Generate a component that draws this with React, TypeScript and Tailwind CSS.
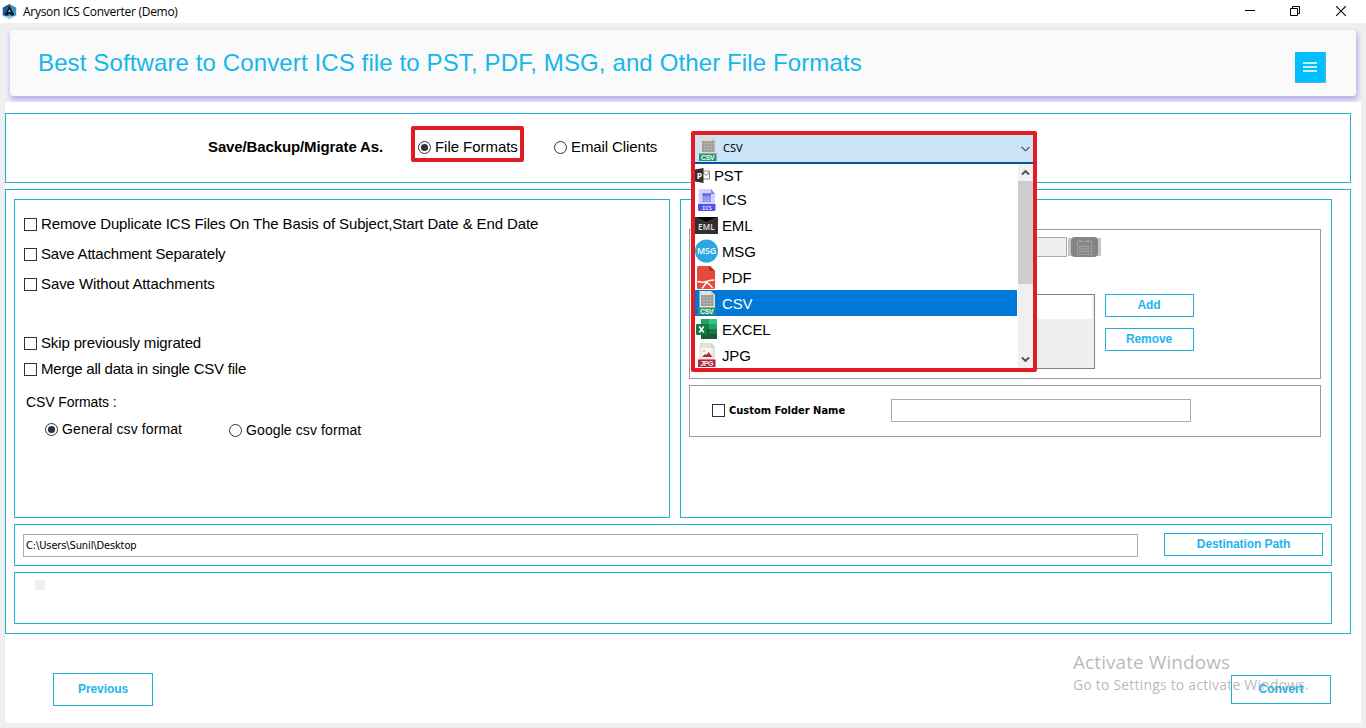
import type { ReactNode } from "react";

function Check({ label, className }: { label: string; className: string }) {
  return (
    <div className={`flex h-[13px] items-center gap-[4px] whitespace-nowrap text-[15px] leading-[13px] ${className}`}>
      <span className="size-[13px] shrink-0 border border-[#333] bg-white" />
      <span className="mb-[2px]">{label}</span>
    </div>
  );
}

function Radio({ label, checked, className }: { label: string; checked?: boolean; className: string }) {
  return (
    <div className={`flex h-[13px] items-center gap-[4px] whitespace-nowrap leading-[13px] ${className}`}>
      <svg className="size-[13px] shrink-0" viewBox="0 0 13 13">
        <circle cx="6.5" cy="6.5" r="6" fill="#fff" stroke="#333" />
        {checked && <circle cx="6.5" cy="6.5" r="3.6" fill="#333" />}
      </svg>
      <span>{label}</span>
    </div>
  );
}

function Button({ children, className }: { children: ReactNode; className: string }) {
  return (
    <button className={`flex items-center justify-center border border-[#1fb0d6] text-[12px] font-bold leading-none tracking-[-0.080px] text-[#1cb6ee] ${className}`}>
      {children}
    </button>
  );
}

function AppLogo() {
  return (
    <svg className="size-[15px]" viewBox="0 0 15 15">
      <path d="M7.5 0 14.2 3.7v7.6L7.5 15 .8 11.3V3.7Z" fill="#3f8cc4" />
      <path d="M7.5 0 .8 3.7v7.6L4 13 7.5 7Z" fill="#1f5f96" />
      <path d="M.8 11 7.5 12.6 14.2 11v.3L7.5 15 .8 11.3Z" fill="#9fd0ea" />
      <path d="M7.5 1.6 12.4 11.4H9.8L7.5 9.6 5.2 11.4H2.6Z" fill="#0b0f16" />
      <path d="M7.5 5.2 9 8.600 7.5 7.600 6 8.600Z" fill="#cfe6f5" />
    </svg>
  );
}

function SheetIcon({ faded }: { faded?: boolean }) {
  return (
    <svg width="18" height="24" viewBox="0 0 18 24">
      <path d="M1.500 0h11.500l4 4v14H1.500Z" fill={faded ? "#dcdcd0" : "#e2e5da"} />
      <path d="M13 0v4h4Z" fill="#c8d2cc" />
      <path d="M3 4h12.500v11H3Z" fill="#9c9894" />
      <path d="M3 6.700h12.500M3 9.500h12.500M3 12.300h12.500M6 4v11M9.200 4v11M12.400 4v11" stroke="#bdb9b5" strokeWidth=".7" />
      <rect x="0" y="16.500" width="17.500" height="7.500" fill="#2f9071" />
      <text x="8.8" y="23" textAnchor="middle" fontSize="7" fontWeight="700" fontFamily="Liberation Sans, sans-serif" fill="#e9fff6" textLength="13.500">CSV</text>
    </svg>
  );
}

function PstIcon() {
  return (
    <svg width="16" height="15" viewBox="0 0 16 15">
      <path d="M7 3h7.5v8H7Z" fill="#fff" stroke="#888" />
      <path d="m8 4.5 2.500 2.400h1.500L14.500 4" fill="none" stroke="#888" />
      <path d="M0 1.5 8.5 0v15L0 13.4Z" fill="#303030" />
      <text x="1.8" y="10.6" fontSize="8.5" fontWeight="700" fontFamily="Open Sans, sans-serif" fill="#fff">P</text>
    </svg>
  );
}

function IcsIcon() {
  return (
    <svg width="18" height="22" viewBox="0 0 18 22">
      <path d="M2 0h11l4 5v10H.5V1.5Q.5 0 2 0Z" fill="#d3d1fb" />
      <path d="M13 0v5h4Z" fill="#8583ea" />
      <path d="M4.500 4.500h8.500v8.500H4.500Z" fill="#8b89f0" />
      <path d="M4.500 4.500h8.500v2H4.500Z" fill="#605ee6" />
      <path d="M5 9.500h7.500M5 11.500h7.500M7.500 7.500v5M10 7.500v5" stroke="#b3b1fa" strokeWidth=".6" />
      <path d="M0 15h17.500v5.500q0 1.500-1.500 1.500H1.500Q0 22 0 20.500Z" fill="#5150f0" />
      <text x="8.8" y="20.600" textAnchor="middle" fontSize="5.600" fontWeight="700" fontFamily="DejaVu Sans Mono, monospace" fill="#dcdcff">ICS</text>
    </svg>
  );
}

function EmlIcon() {
  return (
    <svg width="23" height="17" viewBox="0 0 23 17">
      <rect width="23" height="17" fill="#303030" />
      <path d="M0 0h23L11.500 5.500Z" fill="#050505" />
      <path d="m0 0 11.500 5.500L23 0" fill="none" stroke="#555" strokeWidth=".6" />
      <text x="11.300" y="13.300" textAnchor="middle" fontSize="8" fontWeight="600" fontFamily="Open Sans, sans-serif" fill="#e8e8e8" textLength="16.500">EML</text>
    </svg>
  );
}

function MsgIcon() {
  return (
    <svg width="23" height="24" viewBox="0 0 23 24">
      <circle cx="11.500" cy="12" r="11.500" fill="#2ba8e0" />
      <text x="11.500" y="15" textAnchor="middle" fontSize="8.800" fontWeight="600" fontFamily="Open Sans, sans-serif" fill="#fff" textLength="19" lengthAdjust="spacingAndGlyphs">MSG</text>
    </svg>
  );
}

function PdfIcon() {
  return (
    <svg width="18" height="23" viewBox="0 0 18 23">
      <path d="M1.500 0H13l5 5v16.500q0 1.500-1.500 1.500h-15Q0 23 0 21.500v-20Q0 0 1.500 0Z" fill="#e54b3c" />
      <path d="M12 0v3.500Q12 5 13.500 5H18L13 0Z" fill="#b5342a" />
      <path d="M.5 15.500Q6 17 9.500 15.500T17 14M10 16Q8 18.500 5 22.500M9 16.500Q12 17 15.500 22" fill="none" stroke="#fff" strokeWidth="1.400" />
    </svg>
  );
}

function ExcelIcon() {
  return (
    <svg width="21" height="20" viewBox="0 0 21 20">
      <path d="M5 0h8v20H5Z" fill="#21a366" />
      <path d="M13 0h8v5h-8Z" fill="#33c481" />
      <path d="M5 5h8v5H5Z" fill="#107c41" />
      <path d="M13 5h8v5h-8Z" fill="#21a366" />
      <path d="M5 10h16v10H5Z" fill="#185c37" />
      <path d="M13 10h8v5h-8Z" fill="#107c41" />
      <rect y="5" width="11" height="11" rx="1" fill="#107c41" />
      <path d="m3.200 7.500 4.600 6M7.800 7.500l-4.600 6" stroke="#fff" strokeWidth="1.600" />
    </svg>
  );
}

function JpgIcon() {
  return (
    <svg width="18" height="24" viewBox="0 0 18 24">
      <path d="M1.500 0h11.500l4 4v14H1.500Z" fill="#e2e2d9" />
      <path d="M13 0v4h4Z" fill="#ccd2cc" />
      <path d="M3.500 5h11v10h-11Z" fill="#f8f5f0" />
      <path d="m4 14 3-3 1.500 1L10.500 9l4 5Z" fill="#b12a3c" />
      <circle cx="6" cy="8" r="1.100" fill="#e8c04a" />
      <rect y="16.500" width="17.500" height="7.500" fill="#b3283a" />
      <text x="8.800" y="23" textAnchor="middle" fontSize="7" fontWeight="700" fontFamily="Liberation Sans, sans-serif" fill="#ffeaea" textLength="13">JPG</text>
    </svg>
  );
}

const formats: { name: string; icon: ReactNode; row: string; cell: string }[] = [
  { name: "PST", icon: <PstIcon />, row: "h-[23px]", cell: "w-[19px]" },
  { name: "ICS", icon: <IcsIcon />, row: "h-[25px]", cell: "w-[27px] pl-[3px]" },
  { name: "EML", icon: <EmlIcon />, row: "h-[26px]", cell: "w-[27px]" },
  { name: "MSG", icon: <MsgIcon />, row: "h-[26px]", cell: "w-[27px]" },
  { name: "PDF", icon: <PdfIcon />, row: "h-[26px]", cell: "w-[27px] pl-[2px]" },
  { name: "CSV", icon: <SheetIcon />, row: "h-[26px] bg-[#0078d7] text-white", cell: "w-[27px] pl-[3px]" },
  { name: "EXCEL", icon: <ExcelIcon />, row: "h-[26px]", cell: "w-[27px] pl-[1px]" },
  { name: "JPG", icon: <JpgIcon />, row: "h-[26px]", cell: "w-[27px] pl-[3px]" },
];

function FormatSelect() {
  return (
    <div className="absolute left-[691px] top-[131px] flex h-[241px] w-[346px] flex-col rounded-[2px] border-4 border-[#e31b23] bg-white">
      <div className="flex h-[29px] shrink-0 items-center border-b-2 border-[#00549c] bg-[#cce4f7] pl-[4px] pr-[3px]">
        <SheetIcon faded />
        <span className="ml-[6px] font-['Noto_Sans',sans-serif] text-[11px]">CSV</span>
        <svg className="ml-auto" width="9" height="6" viewBox="0 0 9 6">
          <path d="m.5.800 4 4 4-4" fill="none" stroke="#444" strokeWidth="1.100" />
        </svg>
      </div>
      <div className="flex min-h-0 flex-1">
        <ul className="w-[322px]">
          {formats.map((f) => (
            <li key={f.name} className={`flex items-center overflow-hidden text-[15px] leading-none tracking-[-0.150px] ${f.row}`}>
              <span className={`shrink-0 ${f.cell}`}>{f.icon}</span>
              <span>{f.name}</span>
            </li>
          ))}
        </ul>
        <div className="ml-[1px] flex w-[15px] flex-col bg-[#f0f0f0]">
          <div className="flex h-[17px] items-center justify-center">
            <svg width="9" height="7" viewBox="0 0 9 7"><path d="M1 5.500 4.500 2 8 5.500" fill="none" stroke="#505050" strokeWidth="1.900" /></svg>
          </div>
          <div className="h-[103px] bg-[#cdcdcd]" />
          <div className="mt-auto flex h-[17px] items-center justify-center">
            <svg width="9" height="7" viewBox="0 0 9 7"><path d="M1 1.500 4.500 5 8 1.500" fill="none" stroke="#505050" strokeWidth="1.900" /></svg>
          </div>
        </div>
      </div>
    </div>
  );
}

function CalendarButton() {
  return (
    <div className="ml-[1px] flex h-[18px] w-[33px] items-center justify-center bg-[#c6c6c6]">
      <svg width="27" height="20" viewBox="0 0 27 20" className="shrink-0">
        <rect width="27" height="20" rx="4" fill="#858585" />
        <rect x="6.500" y="4.500" width="14" height="13" fill="none" stroke="#a0a0a0" />
        <path d="M8 3.500h3M16 3.500h3M8 9.500h11M8 12h11M8 14.500h11" stroke="#a8a8a8" strokeWidth="1.300" strokeDasharray="2 .8" />
      </svg>
    </div>
  );
}

export default function App() {
  return (
    <div className="relative flex h-[728px] w-[1366px] flex-col overflow-hidden bg-[#efefef] font-['Liberation_Sans',Arial,sans-serif] text-black">
      <header className="flex h-[23px] shrink-0 items-center bg-white pl-[2px] pr-[20px]">
        <AppLogo />
        <span className="ml-[6px] mt-[1px] font-['Open_Sans',sans-serif] text-[12px] tracking-[-0.280px]">Aryson ICS Converter (Demo)</span>
        <div className="mb-[2px] ml-auto flex items-center gap-[35px]">
          <svg width="10" height="11" viewBox="0 0 10 11"><path d="M0 5.500h10" stroke="#000" /></svg>
          <svg width="10" height="10" viewBox="0 0 10 10" fill="none" stroke="#000"><path d="M.5 2.500h7v7h-7zM2.500 2.500v-2h7v7h-2" /></svg>
          <svg className="ml-[1px]" width="10" height="10" viewBox="0 0 10 10"><path d="m0 0 10 10M10 0 0 10" stroke="#000" strokeWidth="1.100" /></svg>
        </div>
      </header>

      <div className="h-[79px] shrink-0 overflow-hidden pl-[10px] pr-[10px] pt-[7px]">
        <div className="flex h-[66px] items-center justify-between rounded-[3px] bg-[#fafafa] pl-[28px] pr-[30px] shadow-[1px_3px_5px_1px_#b9b3ee]">
          <h1 className="text-[24px] leading-none tracking-[0.120px] text-[#16b6ec]">
            Best Software to Convert ICS file to PST, PDF, MSG, and Other File Formats
          </h1>
          <button className="mt-[9px] flex size-[31px] items-center justify-center border-b border-r border-[#5fb0c8] bg-[#00bfff]">
            <svg width="14" height="10" viewBox="0 0 14 10"><path d="M0 1h14M0 5h14M0 9h14" stroke="#c8f2ff" strokeWidth="1.800" /></svg>
          </button>
        </div>
      </div>

      <main className="mx-[5px] flex h-[621px] flex-col bg-white pr-[10px] pt-[11px]">
        <section className="flex h-[70px] shrink-0 border border-[#1fb0d6] pl-[202px] pt-[12px]">
          <div className="mt-[13px] h-[16px] w-[203px] text-[15px] font-bold leading-[16px] tracking-[-0.120px]">Save/Backup/Migrate As.</div>
          <div className="flex h-[36px] w-[113px] items-center rounded-[2px] border-4 border-[#e31b23] pl-[3px] pt-[6px]">
            <Radio label="File Formats" checked className="text-[15px] tracking-[-0.050px] [&>span]:mb-[2px]" />
          </div>
          <Radio label="Email Clients" className="ml-[30px] mt-[15px] text-[15px] tracking-[-0.100px] [&>span]:mb-[2px]" />
        </section>

        <section className="mt-[6px] flex h-[445px] shrink-0 flex-col border border-[#1fb0d6] pl-[8px] pr-[18px] pt-[9px]">
          <div className="flex h-[319px] shrink-0 gap-[10px]">
            <div className="w-[656px] border border-[#1fb0d6] pl-[9px] pt-[18px]">
              <Check label="Remove Duplicate ICS Files On The Basis of Subject,Start Date & End Date" className="tracking-[-0.120px]" />
              <Check label="Save Attachment Separately" className="mt-[17px] tracking-[-0.190px]" />
              <Check label="Save Without Attachments" className="mt-[17px] tracking-[-0.090px]" />
              <Check label="Skip previously migrated" className="mt-[46px] tracking-[-0.140px]" />
              <Check label="Merge all data in single CSV file" className="mt-[13px] tracking-[-0.230px]" />
              <div className="ml-[2px] mt-[18px] h-[16px] text-[14px] leading-[16px] tracking-[-0.100px]">CSV Formats :</div>
              <div className="ml-[21px] mt-[13px] flex">
                <Radio label="General csv format" checked className="w-[184px] text-[14px] tracking-[0.100px]" />
                <Radio label="Google csv format" className="mt-[1px] text-[14px] tracking-[0.100px]" />
              </div>
            </div>

            <div className="w-[652px] border border-[#1fb0d6] pl-[8px] pt-[29px]">
              <div className="h-[150px] w-[632px] border border-[#9b9b9b] pt-[7px]">
                <div className="flex h-[20px] items-center">
                  <div className="ml-[177px] h-[20px] w-[200px] border border-[#ababab] bg-[#efefef]" />
                  <CalendarButton />
                </div>
                <div className="mt-[37px] flex">
                  <div className="ml-[105px] h-[75px] w-[300px] border border-[#828282] bg-[#efefef]">
                    <div className="mr-[2px] h-[24px] bg-white" />
                  </div>
                  <div className="ml-[10px] flex flex-col gap-[11px]">
                    <Button className="h-[23px] w-[89px] pb-[2px] pr-[1px]">Add</Button>
                    <Button className="h-[23px] w-[89px] pb-[2px] pr-[1px]">Remove</Button>
                  </div>
                </div>
              </div>
              <div className="mt-[6px] flex h-[52px] w-[632px] items-center border border-[#9b9b9b] pl-[22px]">
                <span className="mb-[2px] size-[13px] border border-[#333]" />
                <span className="ml-[4px] w-[162px] font-['DejaVu_Sans_Condensed',sans-serif] text-[11px] font-bold">Custom Folder Name</span>
                <div className="mb-[2px] h-[23px] w-[300px] border border-[#ababab]" />
              </div>
            </div>
          </div>

          <div className="mt-[6px] flex h-[42px] w-[1318px] shrink-0 border border-[#1fb0d6] pl-[8px] pt-[8px]">
            <div className="mt-[1px] flex h-[23px] w-[1115px] items-center border border-[#ababab] pl-[2px] pt-[1px] font-['DejaVu_Sans_Condensed',sans-serif] text-[11px] tracking-[-0.120px]">
              C:\Users\Sunil\Desktop
            </div>
            <Button className="ml-[26px] h-[23px] w-[159px] pb-[1px]">Destination Path</Button>
          </div>

          <div className="mt-[6px] h-[52px] w-[1318px] shrink-0 border border-[#1fb0d6] pl-[20px] pt-[7px]">
            <div className="size-[10px] bg-[#efefef]" />
          </div>
        </section>

        <footer className="flex items-start justify-between pl-[48px] pr-[20px] pt-[39px]">
          <Button className="h-[33px] w-[100px] pb-[1px]">Previous</Button>
          <Button className="mt-[2px] h-[29px] w-[100px] pb-[2px]">Convert</Button>
        </footer>
      </main>

      <FormatSelect />

      <div className="pointer-events-none absolute left-[1073px] top-[651px] whitespace-nowrap font-['Open_Sans',sans-serif] text-[#8a8a8a]/60">
        <div className="text-[19px] leading-[23px] tracking-[0.080px]">Activate Windows</div>
        <div className="text-[14px] leading-[22px] tracking-[0.190px]">Go to Settings to activate Windows.</div>
      </div>
    </div>
  );
}
